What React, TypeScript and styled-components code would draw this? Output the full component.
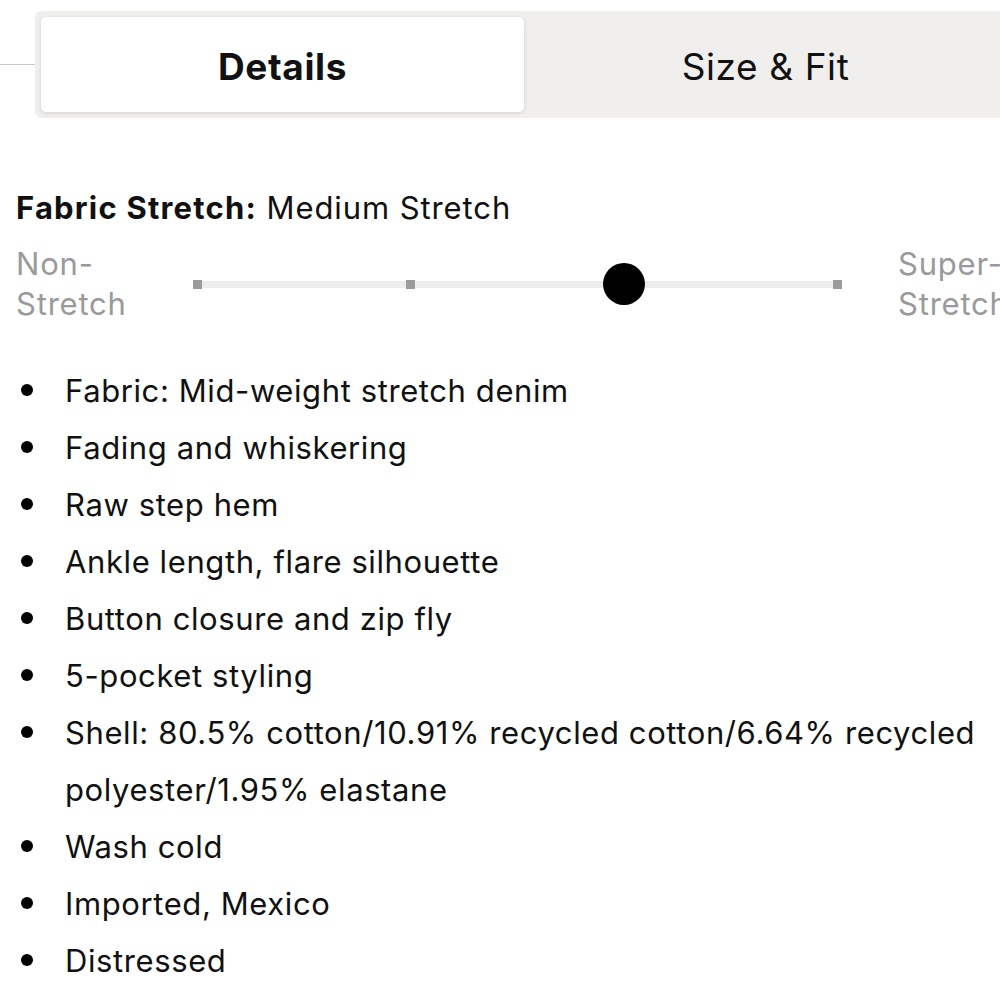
import React from 'react';
import styled, { createGlobalStyle } from 'styled-components';

const GlobalStyle = createGlobalStyle`
  html, body {
    margin: 0;
    padding: 0;
    background: #ffffff;
  }
  body {
    font-family: Inter, "Liberation Sans", Arial, sans-serif;
    color: #111111;
    overflow: hidden;
  }
`;

const Page = styled.div`
  width: 1000px;
  height: 1000px;
  overflow: hidden;
  background: #ffffff;
`;

const Header = styled.div`
  display: flex;
  align-items: center;
  margin-top: 11px;
`;

const Rule = styled.div`
  flex: 0 0 35px;
  height: 1px;
  background: #c8c8c8;
`;

const TabBar = styled.div`
  flex: 0 0 auto;
  display: flex;
  padding: 6px;
  background: #f1efee;
  border-radius: 6px;
`;

const Tab = styled.button<{ $active?: boolean }>`
  width: 483px;
  height: 95px;
  border: none;
  border-radius: 5px;
  background: ${p => (p.$active ? '#ffffff' : 'transparent')};
  box-shadow: ${p => (p.$active ? '0 1px 4px rgba(0,0,0,0.12)' : 'none')};
  font-family: inherit;
  font-size: 37px;
  letter-spacing: 0.6px;
  padding: 4px 0 0 0;
  font-weight: ${p => (p.$active ? 700 : 400)};
  color: #111111;
  cursor: pointer;
`;

const Content = styled.div`
  padding: 70px 0 0 16px;
`;

const StretchTitle = styled.div`
  font-size: 31px;
  letter-spacing: 0.9px;
  line-height: 40px;
  white-space: nowrap;

  strong {
    font-weight: 700;
    letter-spacing: 1.2px;
  }
`;

const SliderRow = styled.div`
  display: flex;
  align-items: center;
  margin-top: 16px;
  white-space: nowrap;
`;

const EndLabel = styled.div<{ $width: number }>`
  flex: 0 0 ${p => p.$width}px;
  font-size: 31px;
  letter-spacing: 0.8px;
  line-height: 40px;
  color: #9a9a9a;
`;

const Track = styled.div`
  position: relative;
  flex: 0 0 649px;
  height: 7px;
  background: #ececec;
  display: flex;
  align-items: center;
  justify-content: space-between;
  margin-right: 56px;
`;

const Tick = styled.span`
  width: 9px;
  height: 9px;
  background: #9b9b9b;
`;

const Knob = styled.span`
  position: absolute;
  top: 50%;
  width: 42px;
  height: 42px;
  margin: -21px 0 0 -21px;
  border-radius: 50%;
  background: #000000;
`;

const List = styled.ul`
  list-style: none;
  margin: 38px 0 0 0;
  padding: 0;
`;

const Item = styled.li`
  position: relative;
  padding-left: 49px;
  font-size: 31px;
  letter-spacing: 0.6px;
  line-height: 57px;
  color: #111111;

  &::before {
    content: '';
    position: absolute;
    left: 5px;
    top: 22px;
    width: 12px;
    height: 12px;
    border-radius: 50%;
    background: #000000;
  }
`;

const items = [
  'Fabric: Mid-weight stretch denim',
  'Fading and whiskering',
  'Raw step hem',
  'Ankle length, flare silhouette',
  'Button closure and zip fly',
  '5-pocket styling',
  'Shell: 80.5% cotton/10.91% recycled cotton/6.64% recycled polyester/1.95% elastane',
  'Wash cold',
  'Imported, Mexico',
  'Distressed',
];

export default function App() {
  const knobAt = 2 / 3;
  return (
    <Page>
      <GlobalStyle />
      <Header>
        <Rule />
        <TabBar>
          <Tab $active>Details</Tab>
          <Tab>Size &amp; Fit</Tab>
        </TabBar>
      </Header>
      <Content>
        <StretchTitle>
          <strong>Fabric Stretch:</strong> Medium Stretch
        </StretchTitle>
        <SliderRow>
          <EndLabel $width={177}>
            Non-
            <br />
            Stretch
          </EndLabel>
          <Track>
            <Tick />
            <Tick />
            <Tick />
            <Tick />
            <Knob style={{ left: `calc(4.5px + ${knobAt} * (100% - 9px))` }} />
          </Track>
          <EndLabel $width={200}>
            Super-
            <br />
            Stretch
          </EndLabel>
        </SliderRow>
        <List>
          {items.map(text => (
            <Item key={text}>{text}</Item>
          ))}
        </List>
      </Content>
    </Page>
  );
}
